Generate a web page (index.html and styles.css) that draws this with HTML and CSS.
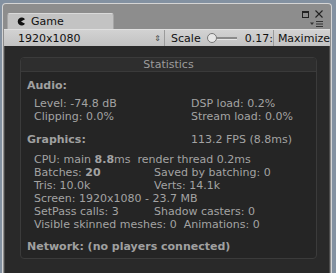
FILE: index.html
```html
<!DOCTYPE html>
<html lang="en">
<head>
    <meta charset="UTF-8">
    <title>Game</title>
    <link rel="stylesheet" href="styles.css">
</head>
<body>
    <div class="window">
        <div class="tabbar">
            <div class="tab">
                <svg class="tab-icon" width="8" height="9" viewBox="0 0 8 9">
                    <path d="M4 4.5 L8 2.2 A4 4 0 1 0 8 6.8 Z" fill="#111"/>
                </svg>
                <span>Game</span>
            </div>
            <div class="win-ctrls">
                <div class="ctrl-top">
                    <span class="ctrl-max"></span>
                    <svg width="8" height="8" viewBox="0 0 8 8">
                        <path d="M0.5 0.5 L7.5 7.5 M7.5 0.5 L0.5 7.5" stroke="#222" stroke-width="1.1"/>
                    </svg>
                </div>
                <svg class="ctrl-menu" width="14" height="6" viewBox="0 0 14 6">
                    <path d="M0 1.5 H4 L2 4 Z" fill="#333"/>
                    <path d="M6 0.5 H13 M6 3 H13 M6 5.5 H13" stroke="#333" stroke-width="1"/>
                </svg>
            </div>
        </div>

        <div class="toolbar">
            <div class="tb-item tb-res">
                <span>1920x1080</span>
                <span class="tb-arrows">&#8661;</span>
            </div>
            <div class="tb-item tb-scale">
                <span>Scale</span>
                <span class="slider">
                    <span class="slider-thumb"></span>
                    <span class="slider-track"></span>
                </span>
                <span class="scale-val">0.17:</span>
            </div>
            <div class="tb-item tb-max">Maximize</div>
        </div>

        <div class="view">
            <div class="stats">
                <div class="stats-head">Statistics</div>
                <div class="stats-body">
                    <div class="title">Audio:</div>
                    <div class="rows audio">
                        <div class="row"><span class="c1">Level: -74.8 dB</span><span>DSP load: 0.2%</span></div>
                        <div class="row"><span class="c1">Clipping: 0.0%</span><span>Stream load: 0.0%</span></div>
                    </div>

                    <div class="row title-row">
                        <span class="c1 title">Graphics:</span>
                        <span>113.2 FPS (8.8ms)</span>
                    </div>
                    <div class="rows gfx">
                        <div class="row">CPU: main <b>8.8</b>ms  render thread 0.2ms</div>
                        <div class="row"><span class="c1">Batches: <b>20</b></span><span>Saved by batching: 0</span></div>
                        <div class="row"><span class="c1">Tris: 10.0k</span><span>Verts: 14.1k</span></div>
                        <div class="row">Screen: 1920x1080 - 23.7 MB</div>
                        <div class="row"><span class="c1">SetPass calls: 3</span><span>Shadow casters: 0</span></div>
                        <div class="row">Visible skinned meshes: 0  Animations: 0</div>
                    </div>

                    <div class="title net">Network: (no players connected)</div>
                </div>
            </div>
        </div>
    </div>
</body>
</html>
```

FILE: styles.css
```css
html, body {
    margin: 0;
    height: 100%;
}
body {
    background: #8391a1;
    padding: 3px 4px 0 2px;
    box-sizing: border-box;
    font-family: "DejaVu Sans", Verdana, sans-serif;
    font-size: 11px;
    overflow: hidden;
}
.window {
    height: 100%;
    background: #8d8d8d;
    border: 1px solid #d4d4d4;
    border-bottom: none;
    border-radius: 4px 4px 0 0;
    padding: 0 1px;
    display: flex;
    flex-direction: column;
}
.tabbar {
    height: 25px;
    display: flex;
    align-items: flex-end;
    padding-left: 3px;
}
.tab {
    width: 96px;
    height: 15px;
    background: #c3c3c3;
    border: 1px solid #a6a6a6;
    border-top-color: #dadada;
    border-bottom: none;
    border-radius: 3px 3px 0 0;
    display: flex;
    align-items: center;
    gap: 6px;
    padding-left: 9px;
    color: #111;
    box-sizing: content-box;
}
.tab-icon {
    display: block;
}
.win-ctrls {
    margin-left: auto;
    align-self: stretch;
    display: flex;
    flex-direction: column;
    align-items: flex-end;
    padding: 6px 7px 0 0;
    gap: 3px;
}
.ctrl-top {
    display: flex;
    align-items: center;
    gap: 6px;
}
.ctrl-max {
    width: 5px;
    height: 4px;
    border: 1px solid #222;
    border-top-width: 2px;
}
.ctrl-menu {
    display: block;
    margin-right: -1px;
}
.toolbar {
    height: 16px;
    background: linear-gradient(#d2d2d2, #c2c2c2);
    border-top: 1px solid #e0e0e0;
    display: flex;
    align-items: center;
    color: #111;
}
.tb-item {
    height: 100%;
    display: flex;
    align-items: center;
    box-sizing: border-box;
}
.tb-res {
    width: 169px;
    padding-left: 14px;
    padding-right: 3px;
    justify-content: space-between;
    border-right: 1px solid #9b9b9b;
}
.tb-arrows {
    font-size: 8px;
    color: #444;
}
.tb-scale {
    width: 109px;
    padding-left: 6px;
    border-right: 1px solid #9b9b9b;
}
.slider {
    display: flex;
    align-items: center;
    margin-left: 6px;
}
.slider-thumb {
    width: 9px;
    height: 9px;
    border-radius: 50%;
    background: #e6e6e6;
    border: 1px solid #777;
    box-sizing: border-box;
    width: 10px;
    height: 10px;
}
.slider-track {
    width: 20px;
    height: 2px;
    background: #8a8a8a;
    border-bottom: 1px solid #e4e4e4;
}
.scale-val {
    margin-left: 8px;
}
.tb-max {
    padding-left: 4px;
    white-space: nowrap;
}
.view {
    flex: 1;
    background: #292929;
    border-left: 1px solid #4a4a4a;
    border-right: 1px solid #4a4a4a;
    padding: 11px 11px 0 15px;
}
.stats {
    width: 295px;
    background: #252525;
    border: 1px solid #3b3b3b;
    border-radius: 4px;
    color: #a3a3a3;
}
.stats-head {
    height: 13px;
    line-height: 13px;
    text-align: center;
    background: #2e2e2e;
    border-bottom: 1px solid #3a3a3a;
    border-radius: 3px 3px 0 0;
    color: #9c9c9c;
}
.stats-body {
    padding: 7px 6px 5px 6px;
    line-height: 13px;
}
.title {
    font-weight: bold;
    color: #a0a0a0;
}
.rows {
    padding-left: 7px;
}
.row {
    display: flex;
    white-space: pre;
}
.audio {
    margin-top: 5px;
    margin-bottom: 10px;
}
.audio .c1 {
    width: 157px;
}
.title-row .c1 {
    width: 164px;
}
.gfx {
    margin-top: 7px;
    margin-bottom: 9px;
}
.gfx .c1 {
    width: 120px;
}
b {
    font-weight: bold;
}
```
